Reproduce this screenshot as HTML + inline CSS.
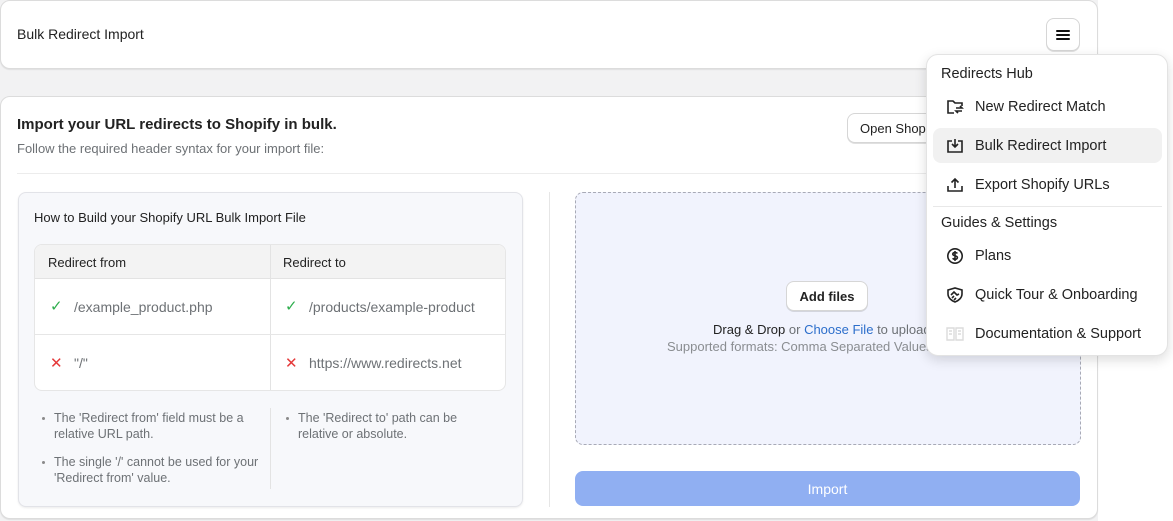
<!DOCTYPE html>
<html><head><style>
*{box-sizing:border-box;margin:0;padding:0}
body{width:1173px;height:521px;background:#fff;font-family:"Liberation Sans",sans-serif;color:#303030;position:relative;overflow:hidden;font-size:13px}
.a{position:absolute}
.card{background:#fff;border:1px solid #dcdcdc;border-radius:10px;box-shadow:0 1px 1px rgba(0,0,0,.08)}
.btn{background:#fff;border:1px solid #d6d6d6;border-radius:8px;box-shadow:0 1px 0 rgba(0,0,0,.12);font-size:13px;color:#222;display:flex;align-items:center;justify-content:center}
.gray{color:#6d7175}
.mi{position:absolute;left:6px;width:229px;height:35px;border-radius:8px;display:flex;align-items:center;font-size:14.5px;color:#222}
.mi svg{margin-left:13px;margin-right:11px}
ul{list-style:none}
li{position:relative;padding-left:20px;font-size:12.5px;line-height:16px;color:#6d7175;margin-bottom:12px}
li:before{content:"";position:absolute;left:8px;top:7px;width:3px;height:3px;border-radius:50%;background:#8a8a8a}
</style></head><body>
<div class="a" style="left:0;top:0;width:1098px;height:521px;background:#f2f2f3"></div>
<div class="a card" style="left:0;top:0;width:1098px;height:69px"></div>
<div class="a" style="left:17px;top:26px;font-size:14px;color:#222">Bulk Redirect Import</div>
<div class="a btn" style="left:1046px;top:18px;width:34px;height:33px">
<svg width="14" height="12" viewBox="0 0 14 12"><path d="M1 2h12M1 6h12M1 10h12" stroke="#111" stroke-width="2" stroke-linecap="round"/></svg></div>

<div class="a card" style="left:0;top:96px;width:1098px;height:423px"></div>
<div class="a" style="left:17px;top:116px;font-size:15px;font-weight:bold;color:#222">Import your URL redirects to Shopify in bulk.</div>
<div class="a gray" style="left:17px;top:141px;font-size:13px">Follow the required header syntax for your import file:</div>
<div class="a btn" style="left:847px;top:113px;width:110px;height:30px;justify-content:flex-start;padding-left:12px">Open Shopify</div>
<div class="a" style="left:17px;top:173px;width:1064px;height:1px;background:#ececec"></div>

<div class="a" style="left:18px;top:192px;width:505px;height:315px;background:#f7f8fb;border:1px solid #e2e3e8;border-radius:8px;box-shadow:0 1px 2px rgba(0,0,0,.08)"></div>
<div class="a" style="left:34px;top:210px;font-size:13px;color:#222">How to Build your Shopify URL Bulk Import File</div>
<div class="a" style="left:34px;top:244px;width:472px;height:147px;background:#fff;border:1px solid #e6e6e6;border-radius:8px;overflow:hidden">
<div class="a" style="left:0;top:0;width:472px;height:34px;background:#f3f3f3;border-bottom:1px solid #e3e3e3"></div>
<div class="a" style="left:235px;top:0;width:1px;height:147px;background:#e3e3e3"></div>
<div class="a" style="left:0;top:89px;width:472px;height:1px;background:#e6e6e6"></div>
<div class="a" style="left:13px;top:10px;font-size:13px;color:#222">Redirect from</div>
<div class="a" style="left:248px;top:10px;font-size:13px;color:#222">Redirect to</div>
<div class="a" style="left:15px;top:52px;color:#2fae4e;font-size:15px">✓</div>
<div class="a gray" style="left:39px;top:54px;font-size:14px">/example_product.php</div>
<div class="a" style="left:250px;top:52px;color:#2fae4e;font-size:15px">✓</div>
<div class="a gray" style="left:274px;top:54px;font-size:14px">/products/example-product</div>
<div class="a" style="left:15px;top:109px;color:#e5393a;font-size:15px">✕</div>
<div class="a gray" style="left:39px;top:110px;font-size:14px">"/"</div>
<div class="a" style="left:250px;top:109px;color:#e5393a;font-size:15px">✕</div>
<div class="a gray" style="left:274px;top:110px;font-size:14px">https://www.redirects.net</div>
</div>
<div class="a" style="left:34px;top:410px;width:230px"><ul><li>The 'Redirect from' field must be a relative URL path.</li><li>The single '/' cannot be used for your 'Redirect from' value.</li></ul></div>
<div class="a" style="left:270px;top:408px;width:1px;height:81px;background:#e3e3e3"></div>
<div class="a" style="left:278px;top:410px;width:220px"><ul><li>The 'Redirect to' path can be relative or absolute.</li></ul></div>

<div class="a" style="left:549px;top:192px;width:1px;height:315px;background:#e6e6e6"></div>
<div class="a" style="left:575px;top:192px;width:506px;height:253px;background:#f1f3fd;border:1px dashed #a8aab6;border-radius:8px"></div>
<div class="a btn" style="left:786px;top:281px;width:82px;height:30px;font-weight:bold;font-size:13px">Add files</div>
<div class="a" style="left:713px;top:322px;font-size:13px;color:#222;white-space:nowrap">Drag &amp; Drop <span class="gray">or</span> <span style="color:#2c6ecb">Choose File</span> <span class="gray">to upload</span></div>
<div class="a gray" style="left:667px;top:339px;font-size:13px;white-space:nowrap;color:#8a8d91">Supported formats: Comma Separated Values</div>
<div class="a" style="left:575px;top:471px;width:505px;height:35px;background:#90aff2;border-radius:8px;color:#fff;font-size:14px;display:flex;align-items:center;justify-content:center">Import</div>

<div class="a" style="left:926px;top:54px;width:242px;height:302px;background:#fff;border:1px solid #e3e3e3;border-radius:12px;box-shadow:0 4px 12px rgba(0,0,0,.14)">
<div class="a" style="left:14px;top:11px;font-size:14.5px;color:#222">Redirects Hub</div>
<div class="mi" style="top:34px"><svg width="18" height="16" viewBox="0 0 18 16" fill="none" stroke="#222" stroke-width="1.6"><path d="M8 14H2V2h5l2 2h7v3"/><path d="M10 9h6l-2-2M16 12h-6l2 2"/></svg>New Redirect Match</div>
<div class="mi" style="top:73px;background:#f1f1f1"><svg width="18" height="16" viewBox="0 0 18 16" fill="none" stroke="#222" stroke-width="1.6"><path d="M6 3H2v11h14V3h-4"/><path d="M9 1v8M6 6l3 3 3-3"/></svg>Bulk Redirect Import</div>
<div class="mi" style="top:112px"><svg width="18" height="16" viewBox="0 0 18 16" fill="none" stroke="#222" stroke-width="1.6"><path d="M2 9v5h14V9"/><path d="M9 11V2M5.5 5.5 9 2l3.5 3.5"/></svg>Export Shopify URLs</div>
<div class="a" style="left:6px;top:151px;width:229px;height:1px;background:#e8e8e8"></div>
<div class="a" style="left:14px;top:160px;font-size:14.5px;color:#222">Guides &amp; Settings</div>
<div class="mi" style="top:183px"><svg width="18" height="18" viewBox="0 0 18 18" fill="none" stroke="#222" stroke-width="1.6"><circle cx="9" cy="9" r="7.2"/><path d="M11.3 6.5c-.4-.7-1.2-1-2.3-1-1.3 0-2.2.6-2.2 1.6 0 2.2 4.6 1.1 4.6 3.5 0 1-1 1.7-2.4 1.7-1.1 0-1.9-.4-2.3-1.1M9 4v10"/></svg>Plans</div>
<div class="mi" style="top:222px"><svg width="18" height="16" viewBox="0 0 18 16" fill="none" stroke="#222" stroke-width="1.6"><path d="M2 3l7-2 7 2v4c0 4-4 7-7 8-3-1-7-4-7-8z"/><path d="M5 8l3-3 3 3 2-1M6 11l2-2M8 13l2-2"/></svg>Quick Tour &amp; Onboarding</div>
<div class="mi" style="top:261px"><svg width="18" height="16" viewBox="0 0 18 16" fill="none" stroke="#dcdcdc" stroke-width="1.4"><path d="M1 2h7v12H1zM10 2h7v12h-7zM3 5h3M3 8h3M12 5h3M12 8h3"/></svg>Documentation &amp; Support</div>
</div>
</body></html>
